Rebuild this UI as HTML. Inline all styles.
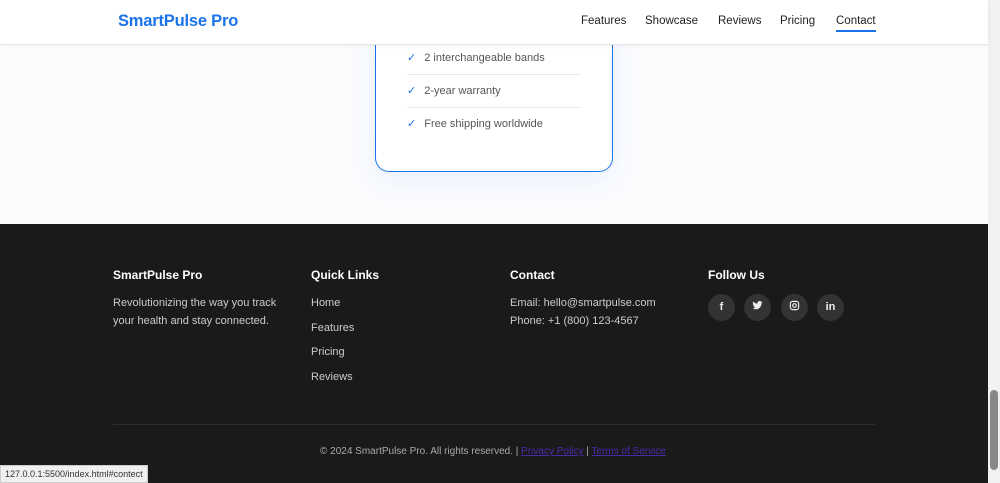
<!DOCTYPE html>
<html><head><style>
*{margin:0;padding:0;box-sizing:border-box}
body{width:1000px;height:483px;overflow:hidden;font-family:"Liberation Sans",sans-serif;background:#fff;position:relative}
.page{position:absolute;left:0;top:0;width:988px;height:483px;background:#fbfcfe}
nav{position:absolute;left:0;top:0;width:988px;height:45px;background:#fff;border-bottom:1px solid #e6e6e6;box-shadow:0 1px 4px rgba(0,0,0,.05);z-index:2}
.logo{position:absolute;left:118px;top:12px;font-size:16.5px;font-weight:bold;color:#1a73e8;letter-spacing:-0.2px}
.links a{position:absolute;top:15px;font-size:11.5px;color:#222;text-decoration:none}
.card{position:absolute;left:375px;top:20px;width:238px;height:152px;border:1.5px solid #1a73e8;border-top:none;border-radius:0 0 14px 14px;background:#fff;box-shadow:0 8px 30px rgba(26,115,232,.08)}
.item{position:absolute;left:31px;width:174px;font-size:11px;color:#555;height:33px}
.item span{color:#1a73e8;margin-right:8px;font-size:11px}
.line{position:absolute;left:407px;width:174px;height:1px;background:#e8e8e8}
footer{position:absolute;left:0;top:224px;width:988px;height:259px;background:#1a1a1a;color:#ddd}
h4{position:absolute;top:44px;font-size:12px;color:#fff;font-weight:bold}
.t{position:absolute;font-size:11px;color:#ccc;line-height:18px}
.s{position:absolute;top:70px;width:27px;height:27px;border-radius:50%;background:#333;color:#eee;font-size:11px;font-weight:bold;text-align:center;line-height:27px}
.sb{position:absolute;left:988px;top:0;width:12px;height:483px;background:#f1f1f1}
</style></head><body>
<div class="page"></div>
<div class="card">
<div class="item" style="top:31px"><span>✓</span>2 interchangeable bands</div>
<div class="item" style="top:64px"><span>✓</span>2-year warranty</div>
<div class="item" style="top:97px"><span>✓</span>Free shipping worldwide</div>
</div>
<div class="line" style="top:74px"></div><div class="line" style="top:107px"></div>
<nav><div class="logo">SmartPulse Pro</div>
<div class="links"><a style="left:581px">Features</a><a style="left:645px">Showcase</a><a style="left:718px">Reviews</a><a style="left:780px">Pricing</a><a style="left:836px;border-bottom:2px solid #1a73e8;padding-bottom:3px">Contact</a></div></nav>
<footer>
<h4 style="left:113px">SmartPulse Pro</h4>
<h4 style="left:311px">Quick Links</h4>
<h4 style="left:510px">Contact</h4>
<h4 style="left:708px">Follow Us</h4>
<div class="t" style="left:113px;top:70px">Revolutionizing the way you track<br>your health and stay connected.</div>
<div class="t" style="left:311px;top:67px;line-height:24.5px">Home<br>Features<br>Pricing<br>Reviews</div>
<div class="t" style="left:510px;top:70px">Email: hello@smartpulse.com<br>Phone: +1 (800) 123-4567</div>
<div class="s" style="left:708px">f</div>
<div class="s" style="left:744px"><svg width="11" height="11" viewBox="0 0 24 24" style="vertical-align:-1px"><path fill="#eee" d="M23 4.6a9 9 0 0 1-2.6.7 4.5 4.5 0 0 0 2-2.5 9 9 0 0 1-2.9 1.1A4.5 4.5 0 0 0 11.8 8 12.8 12.8 0 0 1 2.5 3.3a4.5 4.5 0 0 0 1.4 6 4.5 4.5 0 0 1-2-.6 4.5 4.5 0 0 0 3.6 4.5 4.5 4.5 0 0 1-2 .1 4.5 4.5 0 0 0 4.2 3.1A9 9 0 0 1 1 18.3 12.8 12.8 0 0 0 7.9 20.3c8.3 0 12.8-6.9 12.8-12.8v-.6A9 9 0 0 0 23 4.6z"/></svg></div>
<div class="s" style="left:781px"><svg width="11" height="11" viewBox="0 0 24 24" style="vertical-align:-1px" fill="none" stroke="#eee" stroke-width="2.5"><rect x="3" y="3" width="18" height="18" rx="5"/><circle cx="12" cy="12" r="4"/></svg></div>
<div class="s" style="left:817px">in</div>
<div style="position:absolute;left:113px;top:200px;width:762px;height:1px;background:#2e2e2e"></div>
<div class="t" style="left:320px;top:219px;color:#aaa;font-size:10px">© 2024 SmartPulse Pro. All rights reserved. | <u style="color:#4b2aa8">Privacy Policy</u> | <u style="color:#4b2aa8">Terms of Service</u></div>
</footer>
<div style="position:absolute;left:0;top:465px;background:#f0f0f0;border:1px solid #ccc;font-size:9px;color:#333;padding:3px 4px;height:18px">127.0.0.1:5500/index.html#contect</div>
<div class="sb"><div style="position:absolute;left:2px;top:390px;width:8px;height:80px;background:#888;border-radius:4px"></div></div>
</body></html>
